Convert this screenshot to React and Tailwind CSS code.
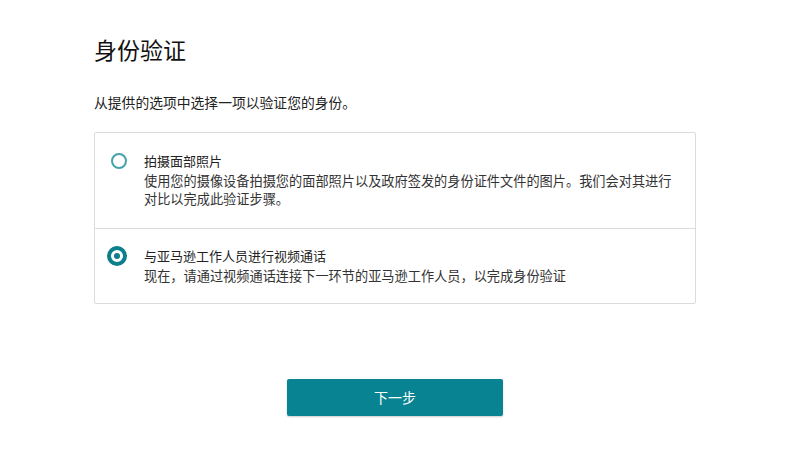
export default function App() {
  const font = { fontFamily: '"Noto Sans CJK SC", "Noto Sans", sans-serif' };
  return (
    <div className="w-[802px] h-[465px] bg-white overflow-hidden" style={font}>
      <div className="ml-[94px] w-[602px] pt-[34px]">
        <h1 className="text-[23px] leading-[30px] font-normal text-[#111111]">身份验证</h1>
        <p className="mt-[28px] text-[13.8px] leading-[20px] text-[#222222]">从提供的选项中选择一项以验证您的身份。</p>
        <div className="mt-[20px] border border-[#dcdcdc] rounded-[2px]">
          <div className="flex pl-[11px] pt-[17px] pb-[20px] border-b border-[#dcdcdc]">
            <div className="w-[26px] h-[22px] flex items-center justify-center shrink-0">
              <div className="w-[16px] h-[16px] rounded-full border-2 border-[#46a2ab]" />
            </div>
            <div className="ml-[12px] w-[532px]">
              <div className="text-[13px] leading-[22px] text-[#222222]">拍摄面部照片</div>
              <div className="text-[13.2px] leading-[18px] text-[#333333]">使用您的摄像设备拍摄您的面部照片以及政府签发的身份证件文件的图片。我们会对其进行对比以完成此验证步骤。</div>
            </div>
          </div>
          <div className="flex pl-[10px] pt-[16px] pb-[18px]">
            <div className="w-[24px] h-[22px] flex items-center justify-center shrink-0">
              <div className="w-[20px] h-[20px] rounded-full border-[4px] border-[#0b7f8b] flex items-center justify-center">
                <div className="w-[6px] h-[6px] rounded-full bg-[#0b7f8b]" />
              </div>
            </div>
            <div className="ml-[15px] w-[532px]">
              <div className="text-[13px] leading-[22px] text-[#222222]">与亚马逊工作人员进行视频通话</div>
              <div className="text-[13.2px] leading-[18px] text-[#333333]">现在，请通过视频通话连接下一环节的亚马逊工作人员，以完成身份验证</div>
            </div>
          </div>
        </div>
        <div className="mt-[75px] flex justify-center">
          <button className="w-[216px] h-[37px] rounded-[2px] bg-[#078391] text-white text-[14px] shadow-[0_1px_2px_rgba(0,0,0,0.2)]">下一步</button>
        </div>
      </div>
    </div>
  );
}
